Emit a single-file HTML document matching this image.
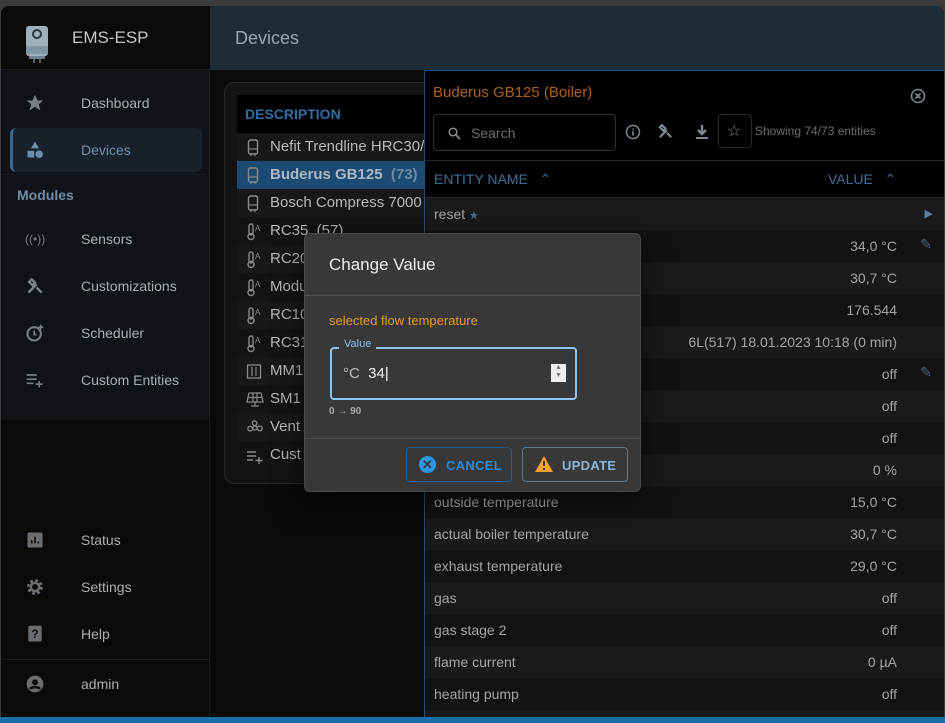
<!DOCTYPE html>
<html><head><meta charset="utf-8"><style>
*{box-sizing:border-box;margin:0;padding:0}
body{width:945px;height:723px;overflow:hidden;background:#3c3c3c;font-family:"Liberation Sans",sans-serif;position:relative;color:#c8c8c8}
.abs{position:absolute}
#win{left:1px;top:6px;width:943px;height:713px;background:#0a0a0a;border-radius:8px 8px 0 0;overflow:hidden}
#bottom{left:0;top:717px;width:945px;height:6px;background:#1d6fa8}
.side-hd{left:0;top:0;width:209px;height:64px;background:#0a0a0a;border-bottom:1px solid #1c1c1c}
.side-menu{left:0;top:64px;width:209px;height:350px;background:#0f1216;border-right:1px solid #1c1c1c}
.side-low{left:0;top:414px;width:209px;height:300px;background:#0a0a0a;border-right:1px solid #1c1c1c}
.mi{position:absolute;left:0;width:209px;height:46px;font-size:14px;color:#a9b0b6}
.mi .ic{position:absolute;left:24px;top:13px;width:20px;height:20px}
.mi .t{position:absolute;left:80px;top:15px}
.topbar{left:209px;top:0;width:734px;height:64px;background:#1e2c35}
.card{left:223px;top:76px;width:210px;height:402px;background:#131313;border:1px solid #262626;border-radius:10px}
.dr{position:absolute;left:12px;width:200px;height:28px;font-size:15px;color:#b8b8b8;white-space:nowrap;overflow:hidden}
.dr .t{position:absolute;left:33px;top:5px}
.dr svg{position:absolute;left:9px;top:6px}
.panel{left:423px;top:64px;width:520px;height:650px;background:#000;border-left:1px solid #1d4f7a;border-top:1px solid #1d4f7a}
.row{position:absolute;left:0;width:520px;height:32px;font-size:14px;color:#a4a4a4}
.row .n{position:absolute;left:9px;top:8px}
.row .v{position:absolute;right:48px;top:8px}
.dlg{left:304px;top:233px;width:337px;height:259px;background:#383838;border:1px solid #4a4a4a;border-radius:6px;box-shadow:0 8px 30px rgba(0,0,0,.6)}
.btn{position:absolute;top:213px;height:35px;border-radius:4px;font-size:13px;font-weight:bold;letter-spacing:.3px}
</style></head><body>
<svg width="0" height="0" style="position:absolute"><defs>
<g id="boil"><rect x="2.5" y="1" width="9" height="14" rx="2" fill="none" stroke="#8a8a8a" stroke-width="1.4"/><path d="M2.5 10h9" stroke="#8a8a8a" stroke-width="1.2"/><path d="M5 15v2M9 15v2" stroke="#8a8a8a" stroke-width="1.2"/></g>
<g id="therm"><rect x="3" y="1" width="4" height="11" rx="2" fill="none" stroke="#8a8a8a" stroke-width="1.4"/><circle cx="5" cy="13.5" r="3" fill="none" stroke="#8a8a8a" stroke-width="1.4"/><text x="9" y="8" font-size="8" fill="#8a8a8a" font-family="Liberation Sans">A</text></g>
</defs></svg>
<div id="win" class="abs">
 <div class="abs side-hd">
  <svg class="abs" style="left:24px;top:14px" width="24" height="44" viewBox="0 0 24 44"><rect x="1" y="6" width="22" height="30" rx="3" fill="#9fb0b8"/><rect x="1" y="26" width="22" height="8" fill="#7f97a3"/><circle cx="12" cy="14" r="4" fill="none" stroke="#2a3a44" stroke-width="2"/><rect x="4" y="36" width="16" height="3" fill="#6d8590"/><rect x="8" y="39" width="2" height="4" fill="#555"/><rect x="14" y="39" width="2" height="4" fill="#555"/></svg>
  <div class="abs" style="left:71px;top:22px;font-size:17px;color:#c6c6c6">EMS-ESP</div>
 </div>
 <div class="abs side-menu">
  <div class="mi" style="top:10px"><svg class="ic" viewBox="0 0 24 24"><path d="M12 2l3 7h7l-5.5 4.5 2 7.5-6.5-4.5-6.5 4.5 2-7.5L2 9h7z" fill="#7a7f84"/></svg><span class="t">Dashboard</span></div>
  <div class="abs" style="left:9px;top:58px;width:192px;height:44px;background:#19212a;border-radius:6px;border-left:3px solid #3a6a94"></div>
  <div class="mi" style="top:57px"><svg class="ic" viewBox="0 0 24 24"><path d="M12 2l5 8H7z" fill="#6c8fae"/><rect x="3" y="13" width="8" height="8" fill="#6c8fae"/><circle cx="17" cy="17" r="4.5" fill="#6c8fae"/></svg><span class="t" style="color:#6c8fae">Devices</span></div>
  <div class="abs" style="left:0;top:104px;width:209px;height:1px;background:#1c1c1c"></div>
  <div class="abs" style="left:16px;top:117px;font-size:14px;font-weight:bold;color:#6f8ea8">Modules</div>
  <div class="mi" style="top:146px"><span class="ic" style="font-size:12px;color:#777;top:16px">((•))</span><span class="t">Sensors</span></div>
  <div class="mi" style="top:193px"><svg class="ic" viewBox="0 0 24 24"><path d="M4 20L14 10M8 4l4 4-3 3-4-4zM14 14l6 6" stroke="#7a7f84" stroke-width="3" fill="none"/></svg><span class="t">Customizations</span></div>
  <div class="mi" style="top:240px"><svg class="ic" viewBox="0 0 24 24"><circle cx="11" cy="13" r="8" stroke="#7a7f84" stroke-width="2.5" fill="none"/><path d="M11 9v5h3M19 2v6M16 5h6" stroke="#7a7f84" stroke-width="2" fill="none"/></svg><span class="t">Scheduler</span></div>
  <div class="mi" style="top:287px"><svg class="ic" viewBox="0 0 24 24"><path d="M2 6h12M2 11h12M2 16h8M17 13v8M13 17h8" stroke="#7a7f84" stroke-width="2"/></svg><span class="t">Custom Entities</span></div>
 </div>
 <div class="abs side-low">
  <div class="mi" style="top:97px"><svg class="ic" viewBox="0 0 24 24"><rect x="3" y="3" width="18" height="18" rx="2" fill="#6a6e72"/><path d="M8 16v-4M12 16V8M16 16v-2" stroke="#0a0a0a" stroke-width="2"/></svg><span class="t">Status</span></div>
  <div class="mi" style="top:144px"><svg class="ic" viewBox="0 0 24 24"><circle cx="12" cy="12" r="7" fill="none" stroke="#6a6e72" stroke-width="5" stroke-dasharray="3 2.5"/><circle cx="12" cy="12" r="5" fill="none" stroke="#6a6e72" stroke-width="3"/></svg><span class="t">Settings</span></div>
  <div class="mi" style="top:191px"><svg class="ic" viewBox="0 0 24 24"><rect x="4" y="2" width="16" height="19" rx="2" fill="#6a6e72"/><text x="12" y="17" font-size="14" font-weight="bold" text-anchor="middle" fill="#0a0a0a" font-family="Liberation Sans">?</text></svg><span class="t">Help</span></div>
  <div class="abs" style="left:0;top:239px;width:209px;height:1px;background:#1c1c1c"></div>
  <div class="mi" style="top:241px"><svg class="ic" viewBox="0 0 24 24"><circle cx="12" cy="12" r="10" fill="#6a6e72"/><circle cx="12" cy="10" r="3.5" fill="#0a0a0a"/><path d="M6 18c2-3 10-3 12 0" stroke="#0a0a0a" stroke-width="3" fill="none"/></svg><span class="t">admin</span></div>
 </div>
 <div class="abs topbar"><div class="abs" style="left:25px;top:22px;font-size:18px;color:#9aa6ae">Devices</div></div>
 <div class="abs card">
  <div class="abs" style="left:12px;top:12px;width:200px;height:38px;background:#000"><span class="abs" style="left:8px;top:11px;font-size:14px;font-weight:bold;color:#2f6fa8">DESCRIPTION</span></div>
  <div class="dr" style="top:50px;background:#181818"><svg width="14" height="18"><use href="#boil"/></svg><span class="t">Nefit Trendline HRC30/</span></div>
  <div class="dr" style="top:78px;background:#1b4a72"><svg width="14" height="18"><use href="#boil"/></svg><span class="t" style="font-weight:bold;color:#a8b8c6">Buderus GB125 &nbsp;<span style="color:#6e8aa2">(73)</span></span></div>
  <div class="dr" style="top:106px;background:#181818"><svg width="14" height="18"><use href="#boil"/></svg><span class="t">Bosch Compress 7000</span></div>
  <div class="dr" style="top:134px"><svg width="16" height="18"><use href="#therm"/></svg><span class="t">RC35 &nbsp;(57)</span></div>
  <div class="dr" style="top:162px;background:#181818"><svg width="16" height="18"><use href="#therm"/></svg><span class="t">RC20</span></div>
  <div class="dr" style="top:190px"><svg width="16" height="18"><use href="#therm"/></svg><span class="t">Modu</span></div>
  <div class="dr" style="top:218px;background:#181818"><svg width="16" height="18"><use href="#therm"/></svg><span class="t">RC10</span></div>
  <div class="dr" style="top:246px"><svg width="16" height="18"><use href="#therm"/></svg><span class="t">RC31</span></div>
  <div class="dr" style="top:274px;background:#181818"><svg width="16" height="18"><rect x="1.5" y="2" width="13" height="13" fill="none" stroke="#8a8a8a" stroke-width="1.3"/><path d="M6 4v9M10 4v9" stroke="#8a8a8a" stroke-width="1.2"/></svg><span class="t">MM1</span></div>
  <div class="dr" style="top:302px"><svg width="18" height="18"><path d="M3 2h12l2 9H1z" fill="none" stroke="#8a8a8a" stroke-width="1.3"/><path d="M2 6.5h14M7 2v9M11 2v9M9 11v4M5 15h8" stroke="#8a8a8a" stroke-width="1.2"/></svg><span class="t">SM1</span></div>
  <div class="dr" style="top:330px;background:#181818"><svg width="18" height="18"><circle cx="9" cy="9" r="2" fill="none" stroke="#8a8a8a" stroke-width="1.2"/><path d="M9 7C5 5 6 1 9 2c3 1 2 4 0 5M11 9c2-3 6-2 5 1s-4 2-5-1M7 10c-2 3-6 2-5-1s4-2 5 1" fill="none" stroke="#8a8a8a" stroke-width="1.2"/></svg><span class="t">Vent</span></div>
  <div class="dr" style="top:358px"><svg width="18" height="18"><path d="M1 5h9M1 9h9M1 13h6M13 10v7M9.5 13.5h7" stroke="#8a8a8a" stroke-width="1.4"/></svg><span class="t">Cust</span></div>
 </div>
 <div class="abs panel">
  <div class="abs" style="left:8px;top:13px;font-size:15px;color:#b0601a">Buderus GB125 (Boiler)</div>
  <svg class="abs" style="left:485px;top:17px" width="16" height="16" viewBox="0 0 16 16"><circle cx="8" cy="8" r="6.5" stroke="#7d8a96" stroke-width="1.6" fill="none"/><path d="M5.5 5.5l5 5M10.5 5.5l-5 5" stroke="#7d8a96" stroke-width="1.6"/></svg>
  <div class="abs" style="left:8px;top:43px;width:183px;height:37px;border:1px solid #333;border-radius:4px"><svg class="abs" style="left:14px;top:12px" width="13" height="13"><circle cx="5" cy="5" r="3.8" fill="none" stroke="#888" stroke-width="1.5"/><path d="M8 8l4 4" stroke="#888" stroke-width="1.7"/></svg><span class="abs" style="left:37px;top:10px;font-size:14px;color:#707070">Search</span></div>
  <svg class="abs" style="left:200px;top:53px" width="16" height="16" viewBox="0 0 16 16"><circle cx="8" cy="8" r="6.5" stroke="#7d8a96" stroke-width="1.5" fill="none"/><path d="M8 7v4.5M8 4.5v1.2" stroke="#7d8a96" stroke-width="1.6"/></svg>
  <svg class="abs" style="left:232px;top:52px" width="17" height="17" viewBox="0 0 24 24"><path d="M4 20L14 10M7 3l5 5-3 3-5-5zM14 14l6 6" stroke="#7d8a96" stroke-width="3" fill="none"/></svg>
  <svg class="abs" style="left:270px;top:53px" width="14" height="16" viewBox="0 0 14 16"><path d="M7 1v9M3 6l4 4 4-4" stroke="#7d8a96" stroke-width="2.4" fill="none"/><rect x="1" y="13" width="12" height="2" fill="#7d8a96"/></svg>
  <div class="abs" style="left:293px;top:43px;width:34px;height:34px;border:1px solid #2a2a2a;border-radius:4px"><span class="abs" style="left:8px;top:6px;font-size:16px;color:#7d8a96">☆</span></div>
  <div class="abs" style="left:330px;top:53px;font-size:12px;color:#6e6e6e">Showing 74/73 entities</div>
  <div class="abs" style="left:0;top:89px;width:520px;height:1px;background:#2a2a2a"></div>
  <div class="abs" style="left:9px;top:100px;font-size:14px;color:#3f6f98">ENTITY NAME &nbsp;&nbsp;⌃</div>
  <div class="abs" style="left:403px;top:100px;font-size:14px;color:#3f6f98">VALUE &nbsp;&nbsp;⌃</div>
  <div class="abs" style="left:0;top:126px;width:520px;height:1px;background:#2a2a2a"></div>
  <div class="row" style="top:127px;background:#1a1a1a"><span class="n">reset <span style="color:#4e6e8c;font-size:11px">★</span></span><span class="abs" style="right:12px;top:9px;font-size:11px;color:#5f7f9c">▶</span></div>
  <div class="row" style="top:159px;background:#121212"><span class="v">34,0 °C</span><span class="abs" style="right:13px;top:6px;color:#4f6478;font-size:14px">✎</span></div>
  <div class="row" style="top:191px;background:#1a1a1a"><span class="v">30,7 °C</span></div>
  <div class="row" style="top:223px;background:#121212"><span class="v">176.544</span></div>
  <div class="row" style="top:255px;background:#1a1a1a"><span class="v">6L(517) 18.01.2023 10:18 (0 min)</span></div>
  <div class="row" style="top:287px;background:#121212"><span class="v">off</span><span class="abs" style="right:13px;top:6px;color:#4f6478;font-size:14px">✎</span></div>
  <div class="row" style="top:319px;background:#1a1a1a"><span class="v">off</span></div>
  <div class="row" style="top:351px;background:#121212"><span class="v">off</span></div>
  <div class="row" style="top:383px;background:#1a1a1a"><span class="v">0 %</span></div>
  <div class="row" style="top:415px;background:#121212"><span class="n">outside temperature</span><span class="v">15,0 °C</span></div>
  <div class="row" style="top:447px;background:#1a1a1a"><span class="n">actual boiler temperature</span><span class="v">30,7 °C</span></div>
  <div class="row" style="top:479px;background:#121212"><span class="n">exhaust temperature</span><span class="v">29,0 °C</span></div>
  <div class="row" style="top:511px;background:#1a1a1a"><span class="n">gas</span><span class="v">off</span></div>
  <div class="row" style="top:543px;background:#121212"><span class="n">gas stage 2</span><span class="v">off</span></div>
  <div class="row" style="top:575px;background:#1a1a1a"><span class="n">flame current</span><span class="v">0 µA</span></div>
  <div class="row" style="top:607px;background:#121212"><span class="n">heating pump</span><span class="v">off</span></div>
  <div class="row" style="top:639px;background:#1a1a1a"></div>
 </div>
</div>
<div id="bottom" class="abs"></div>
<div class="abs dlg">
 <div class="abs" style="left:24px;top:21px;font-size:17px;color:#eee">Change Value</div>
 <div class="abs" style="left:0;top:61px;width:335px;height:1px;background:#525252"></div>
 <div class="abs" style="left:24px;top:79px;font-size:13px;color:#e39a2a">selected flow temperature</div>
 <div class="abs" style="left:25px;top:113px;width:247px;height:53px;border:2px solid #8cc4f2;border-radius:4px"></div>
 <div class="abs" style="left:34px;top:104px;padding:0 5px;background:#383838;font-size:11px;color:#8cc4f2">Value</div>
 <div class="abs" style="left:38px;top:131px;font-size:15px;color:#bbb">°C &nbsp;<span style="color:#eee">34</span><span style="color:#fff">|</span></div>
 <div class="abs" style="left:246px;top:130px;width:15px;height:18px;background:#eee;font-size:7px;color:#777;text-align:center;line-height:8px">▲<br>▼</div>
 <div class="abs" style="left:24px;top:172px;font-size:10px;font-weight:bold;color:#aaa">0 → 90</div>
 <div class="abs" style="left:0;top:204px;width:335px;height:1px;background:#4e4e4e"></div>
 <div class="btn" style="left:101px;width:106px;border:1px solid #1f5d8e"><span class="abs" style="left:12px;top:8px;width:17px;height:17px;border-radius:50%;background:#2a97e6;color:#383838;font-size:13px;text-align:center;line-height:17px">✕</span><span class="abs" style="left:39px;top:10px;color:#2a8ad6">CANCEL</span></div>
 <div class="btn" style="left:217px;width:106px;border:1px solid #627a8e"><svg class="abs" style="left:12px;top:8px" width="18" height="16" viewBox="0 0 18 16"><path d="M9 0L18 16H0z" fill="#f2a325"/><path d="M9 5v5M9 12v2" stroke="#383838" stroke-width="2"/></svg><span class="abs" style="left:39px;top:10px;color:#8eb4d6">UPDATE</span></div>
</div>
</body></html>
